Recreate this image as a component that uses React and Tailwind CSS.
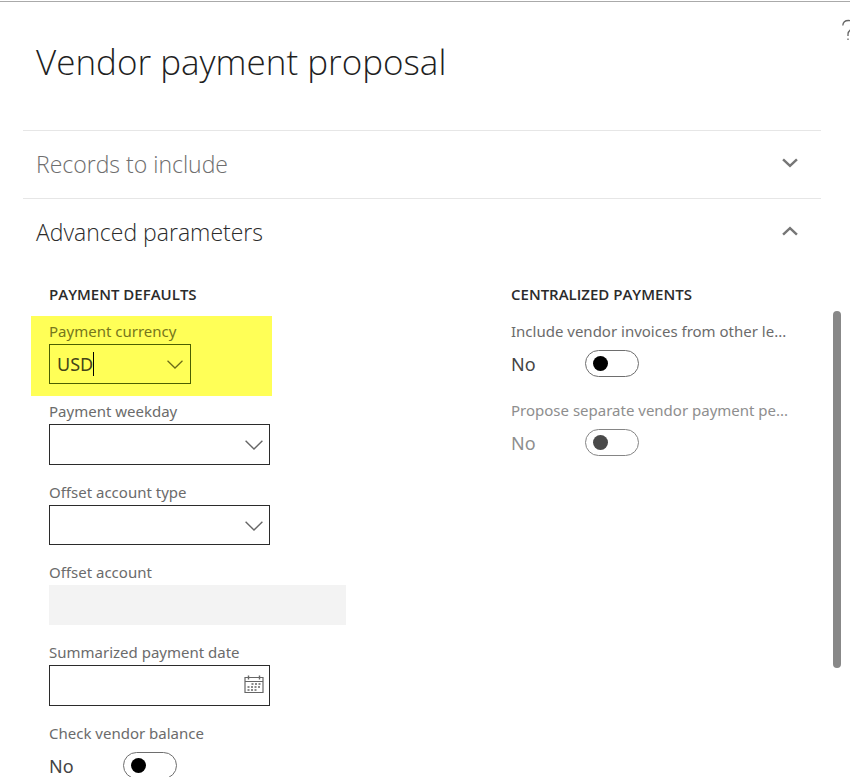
import React, { useState } from 'react';

const Chevron = ({ className, up = false, bold = false }) => (
  <svg
    className={className}
    viewBox="0 0 18 10"
    fill="none"
    stroke="currentColor"
    strokeWidth={bold ? 2.8 : 1.4}
    aria-hidden="true"
  >
    <path d={up ? 'M1.2 9 L9 1.8 L16.8 9' : bold ? 'M1.2 1 L9 8.2 L16.8 1' : 'M0.6 0.8 L9 9 L17.4 0.8'} />
  </svg>
);

const CalendarIcon = ({ className }) => (
  <svg className={className} viewBox="0 0 20 19" fill="none" stroke="currentColor" aria-hidden="true">
    <path d="M1 2.5h18v15H1z M1 6.5h18" strokeWidth="1.2" />
    <path d="M4.5 0.5v4 M15.5 0.5v4" strokeWidth="1.4" />
    <path d="M7.5 9h9 M3.5 12h13 M3.5 15h10" strokeWidth="1.6" strokeDasharray="2 1.5" />
  </svg>
);

const SectionHeader = ({ title, open, onClick }) => (
  <button
    type="button"
    aria-expanded={open}
    onClick={onClick}
    className={`flex h-[67px] w-full items-center justify-between pr-[23px] pl-[13px] font-['Open_Sans',sans-serif] text-[23px] font-light ${
      open ? 'text-[#2b2b2b]' : 'text-[#6e6e6e]'
    }`}
  >
    <span>{title}</span>
    <Chevron up={open} bold className="mb-1 h-[10px] w-4 text-[#767676]" />
  </button>
);

const Field = ({ id, label, children }) => (
  <div className="pt-[3px] pb-3 pl-[18px]">
    <label htmlFor={id} className="block h-[25px] leading-6 text-[#6b6b6b]">{label}</label>
    {children}
  </div>
);

const SelectField = ({ id, label, height = 'h-10' }) => (
  <Field id={id} label={label}>
    <div className="relative w-[221px]">
      <select id={id} className={`block w-full appearance-none border border-[#2b2b2b] bg-white px-2 text-lg ${height}`}>
        <option value=""></option>
      </select>
      <Chevron className="pointer-events-none absolute top-4 right-[7px] h-[10px] w-[18px] text-[#666]" />
    </div>
  </Field>
);

const ToggleField = ({ id, label, disabled = false }) => {
  const [on, setOn] = useState(false);

  return (
    <div className={`pt-[3px] pb-3 pl-[18px] ${disabled ? 'text-[#8e8e8e]' : 'text-[#6b6b6b]'}`}>
      <label htmlFor={id} className="block h-[25px] leading-6 whitespace-nowrap">{label}</label>
      <div className="flex h-[39px] items-center">
        <span className={`w-[74px] text-lg ${disabled ? '' : 'text-[#444]'}`}>{on ? 'Yes' : 'No'}</span>
        <input
          id={id}
          type="checkbox"
          role="switch"
          checked={on}
          disabled={disabled}
          onChange={(e) => setOn(e.target.checked)}
          className="flex h-[27px] w-[54px] shrink-0 appearance-none items-center rounded-full border border-[#6e6e6e] bg-white px-[7px] before:h-[15px] before:w-[15px] before:rounded-full before:bg-black before:content-[''] checked:justify-end disabled:border-[#858585] disabled:before:bg-[#4a4a4a]"
        />
      </div>
    </div>
  );
};

const GroupTitle = ({ children }) => (
  <h2 className="h-[34px] pl-[18px] font-['Open_Sans',sans-serif] leading-6 font-semibold text-[#2b2b2b]">{children}</h2>
);

const App = () => {
  const [recordsOpen, setRecordsOpen] = useState(false);
  const [advancedOpen, setAdvancedOpen] = useState(true);
  const [currency, setCurrency] = useState('USD');

  return (
    <div className="h-screen overflow-hidden bg-white pt-px pb-1 font-['Noto_Sans','Open_Sans',sans-serif] text-[15px]">
      <div className="flex h-full flex-col overflow-hidden border-t border-[#aaa]">
        <header className="flex h-32 shrink-0 justify-between pl-9">
          <h1 className="pt-8 font-['Open_Sans',sans-serif] text-[35px] leading-[56px] font-light text-[#1f1f1f]">
            Vendor payment proposal
          </h1>
          <button type="button" aria-label="Help" className="-mr-2 h-14 w-4 shrink-0 text-[#666]">
            <svg className="h-6 w-4" viewBox="0 0 16 24" fill="none" stroke="currentColor" strokeWidth="1.3">
              <path d="M0.8 7.5 C1 4 3.2 2.5 6.5 2.5 C10 2.5 12 4.5 12 7.5 C12 11 6 11.5 6 16 V18" />
              <path d="M6 20.5v1.5" />
            </svg>
          </button>
        </header>

        <div className="flex min-h-0 flex-1">
          <main className="ml-[23px] min-w-0 flex-1">
            <section className="border-t border-[#e6e6e6]">
              <SectionHeader title="Records to include" open={recordsOpen} onClick={() => setRecordsOpen(!recordsOpen)} />
            </section>

            <section className="border-t border-[#e6e6e6]">
              <SectionHeader title="Advanced parameters" open={advancedOpen} onClick={() => setAdvancedOpen(!advancedOpen)} />
              {advancedOpen && (
                <div className="grid grid-cols-[3fr_2fr] pt-4 pr-5 pl-2">
                  <div>
                    <GroupTitle>PAYMENT DEFAULTS</GroupTitle>

                    {/* Highlighted field */}
                    <div className="w-[241px] bg-[#ffff57] pt-[3px] pb-3 pl-[18px]">
                      <label htmlFor="currency" className="block h-[25px] leading-6 text-[#76761c]">Payment currency</label>
                      <div className="relative w-[142px]">
                        <input
                          id="currency"
                          type="text"
                          value={currency}
                          onChange={(e) => setCurrency(e.target.value)}
                          className="block h-10 w-full border border-[#4b6000] bg-transparent px-[7px] text-lg text-[#444418] outline-none"
                        />
                        <span className="absolute top-2 left-11 h-6 w-px bg-black"></span>
                        <Chevron className="pointer-events-none absolute top-4 right-2 h-[9px] w-4 text-[#6b6b18]" />
                      </div>
                    </div>

                    <SelectField id="weekday" label="Payment weekday" height="h-[41px]" />
                    <SelectField id="offset-type" label="Offset account type" />

                    <Field id="offset-account" label="Offset account">
                      <input id="offset-account" type="text" disabled className="block h-10 w-[297px] bg-[#f3f3f3] px-2 text-lg" />
                    </Field>

                    <Field id="payment-date" label="Summarized payment date">
                      <div className="relative w-[221px]">
                        <input id="payment-date" type="text" className="block h-[41px] w-full border border-[#2b2b2b] bg-white px-2 text-lg" />
                        <CalendarIcon className="pointer-events-none absolute top-[10px] right-[6px] h-[19px] w-5 text-[#666]" />
                      </div>
                    </Field>

                    <ToggleField id="check-balance" label="Check vendor balance" />
                  </div>

                  <div>
                    <GroupTitle>CENTRALIZED PAYMENTS</GroupTitle>
                    <ToggleField id="include-invoices" label="Include vendor invoices from other le..." />
                    <ToggleField id="separate-payment" label="Propose separate vendor payment pe..." disabled />
                  </div>
                </div>
              )}
            </section>
          </main>

          {/* Scroll bar */}
          <div className="w-[29px] shrink-0 pt-[181px] pl-3">
            <div className="h-[357px] w-2 rounded-full bg-[#888]"></div>
          </div>
        </div>
      </div>
    </div>
  );
};

export default App;
